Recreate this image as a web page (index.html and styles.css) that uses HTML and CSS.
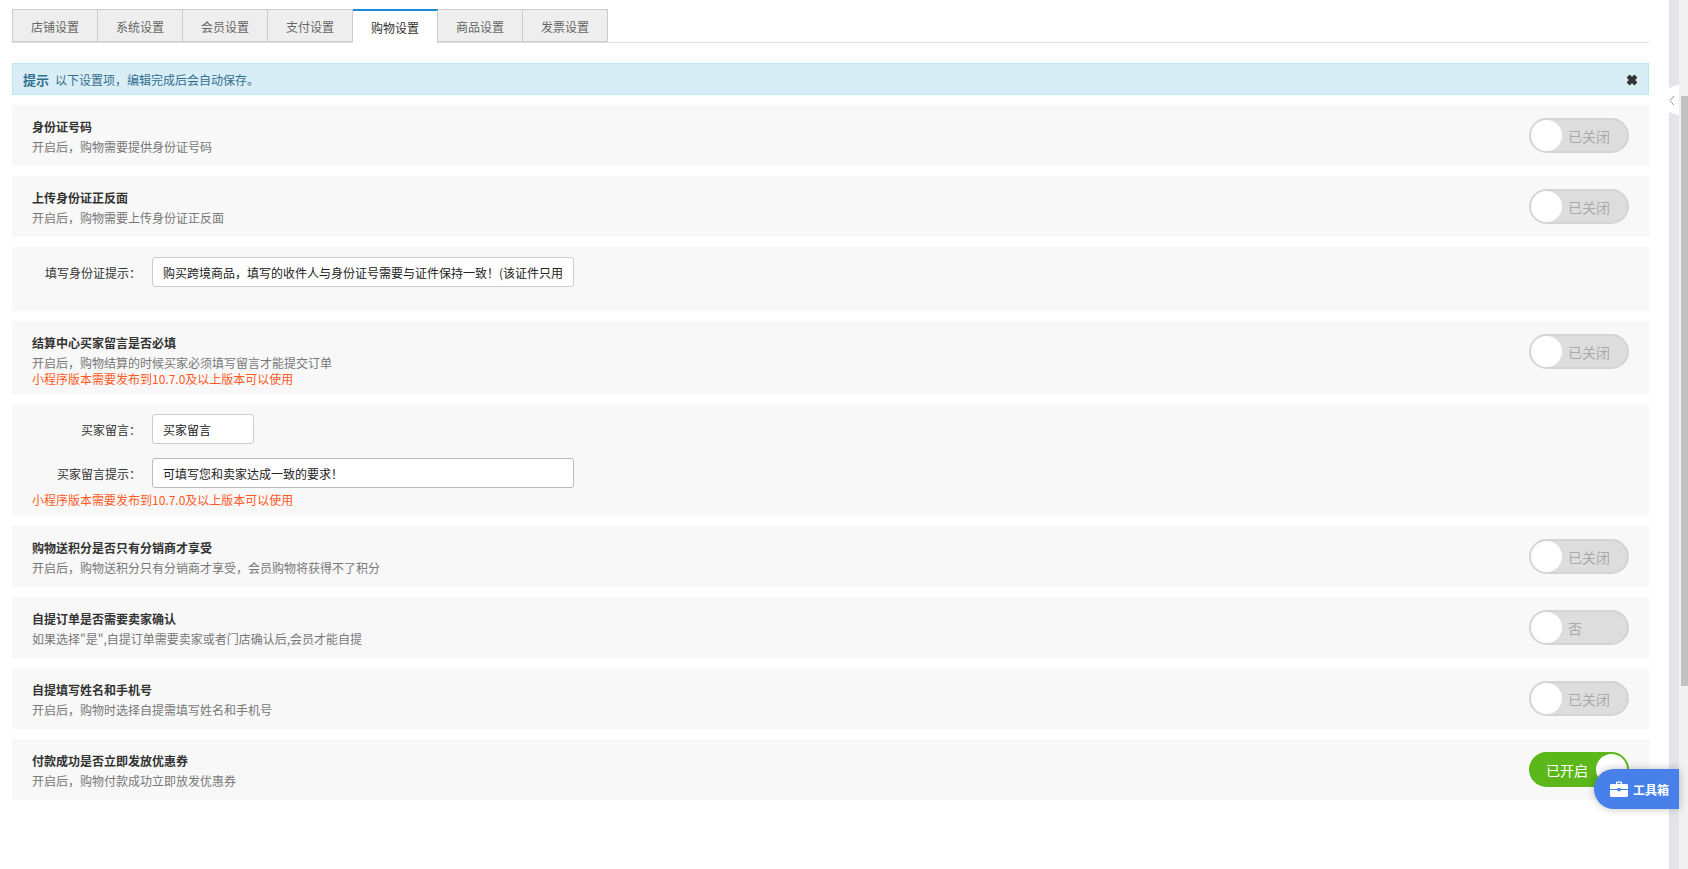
FILE: index.html
```html
<!DOCTYPE html>
<html lang="zh-CN">
<head>
<meta charset="UTF-8">
<meta name="viewport" content="width=device-width, initial-scale=1.0">
<title>购物设置</title>
<link rel="stylesheet" href="styles.css">
</head>
<body>
<div class="page">
  <div class="main">
    <ul class="tabs">
      <li>店铺设置</li>
      <li>系统设置</li>
      <li>会员设置</li>
      <li>支付设置</li>
      <li class="active">购物设置</li>
      <li>商品设置</li>
      <li>发票设置</li>
    </ul>

    <div class="alert">
      <p><strong>提示</strong>以下设置项，编辑完成后会自动保存。</p>
      <svg class="alert-close" width="12" height="12" viewBox="0 0 11 11"><path d="M1.5 3.4 3.4 1.5 5.5 3.600 7.600 1.500 9.500 3.400 7.400 5.500 9.500 7.600 7.600 9.500 5.500 7.400 3.400 9.500 1.500 7.600 3.600 5.500Z" stroke="#333" stroke-width="1.400" stroke-linejoin="round" fill="#333"/></svg>
    </div>

    <div class="row">
      <div class="switch"><i></i><span>已关闭</span></div>
      <h4>身份证号码</h4>
      <p>开启后，购物需要提供身份证号码</p>
    </div>
    <div class="row">
      <div class="switch"><i></i><span>已关闭</span></div>
      <h4>上传身份证正反面</h4>
      <p>开启后，购物需要上传身份证正反面</p>
    </div>
    <div class="row form-row id-tip">
      <div class="field">
        <label>填写身份证提示：</label>
        <input type="text" class="wide" value="购买跨境商品，填写的收件人与身份证号需要与证件保持一致！(该证件只用">
      </div>
    </div>
    <div class="row has-warn">
      <div class="switch"><i></i><span>已关闭</span></div>
      <h4>结算中心买家留言是否必填</h4>
      <p>开启后，购物结算的时候买家必须填写留言才能提交订单</p>
      <p class="warn">小程序版本需要发布到10.7.0及以上版本可以使用</p>
    </div>
    <div class="row form-row">
      <div class="field">
        <label>买家留言：</label>
        <input type="text" class="short" value="买家留言">
      </div>
      <div class="field">
        <label>买家留言提示：</label>
        <input type="text" class="wide strong" value="可填写您和卖家达成一致的要求！">
      </div>
      <p class="warn">小程序版本需要发布到10.7.0及以上版本可以使用</p>
    </div>
    <div class="row">
      <div class="switch"><i></i><span>已关闭</span></div>
      <h4>购物送积分是否只有分销商才享受</h4>
      <p>开启后，购物送积分只有分销商才享受，会员购物将获得不了积分</p>
    </div>
    <div class="row">
      <div class="switch"><i></i><span>否</span></div>
      <h4>自提订单是否需要卖家确认</h4>
      <p>如果选择"是",自提订单需要卖家或者门店确认后,会员才能自提</p>
    </div>
    <div class="row">
      <div class="switch"><i></i><span>已关闭</span></div>
      <h4>自提填写姓名和手机号</h4>
      <p>开启后，购物时选择自提需填写姓名和手机号</p>
    </div>
    <div class="row">
      <div class="switch on"><span>已开启</span><i></i></div>
      <h4>付款成功是否立即发放优惠券</h4>
      <p>开启后，购物付款成功立即放发优惠券</p>
    </div>
  </div>

  <div class="side"></div>
  <div class="scrollbar"><div class="thumb"></div></div>

  <div class="collapse">
    <svg width="6" height="11" viewBox="0 0 6 11"><path d="M5 1 1 5.500 5 10" fill="none" stroke="#999" stroke-width="1"/></svg>
  </div>
  <div class="toolbox">
    <svg width="18" height="16" viewBox="0 0 18 16"><path d="M6 3V1.600C6 .9 6.500.5 7.100.5h3.800c.6 0 1.100.4 1.100 1.100V3h-1.300V1.800H7.300V3Z" fill="#fff"/><path d="M1.500 3h15c.8 0 1.500.6 1.500 1.400V8H10.500V7h-3v1H0V4.400C0 3.600.7 3 1.500 3Z" fill="#fff"/><path d="M0 9h7.500v1.200h3V9H18v5.500c0 .8-.7 1.500-1.500 1.500h-15C.7 16 0 15.300 0 14.500Z" fill="#fff"/></svg>
    <span>工具箱</span>
  </div>
</div>
</body>
</html>
```

FILE: styles.css
```css
* {
  box-sizing: border-box;
}
html, body {
  margin: 0;
  height: 100%;
  overflow: hidden;
}
body {
  background: #fff;
  color: #333;
  font-family: "Noto Sans CJK SC", "Liberation Sans", sans-serif;
  font-size: 12px;
}
.page {
  display: flex;
  height: 869px;
  position: relative;
  overflow: hidden;
}
.main {
  width: 1669px;
  padding: 9px 20px 0 12px;
}
.side {
  width: 10px;
  background: #e4e5ea;
}
.scrollbar {
  width: 9px;
  background: #f1f1f1;
  padding: 96px 0 0 2px;
}
.thumb {
  height: 590px;
  background: #c1c1c1;
}

/* tabs */
.tabs {
  display: flex;
  margin: 0 0 20px;
  padding: 0;
  list-style: none;
  height: 34px;
  border-bottom: 1px solid #ddd;
}
.tabs li {
  width: 85px;
  height: 33px;
  line-height: 33px;
  text-align: center;
  color: #666;
  background: #eee;
  border: 1px solid #ccc;
  border-left-width: 0;
}
.tabs li:first-child {
  width: 86px;
  border-left-width: 1px;
}
.tabs li.active {
  height: 34px;
  color: #333;
  background: #fff;
  border-top: 2px solid #1e88d9;
  border-bottom: 0;
}

/* alert */
.alert {
  display: flex;
  justify-content: space-between;
  align-items: center;
  height: 32px;
  margin-bottom: 10px;
  padding: 0 10px 0 10px;
  color: #31708f;
  background: #d9edf7;
  border: 1px solid #bce8f1;
}
.alert p {
  margin: 0;
}
.alert strong {
  margin-right: 6px;
  font-size: 13px;
}
.alert-close {
  margin-top: 2px;
}

/* rows */
.row {
  min-height: 61px;
  margin-bottom: 10px;
  padding: 12px 20px 9px;
  background: #f8f8f8;
}
.row.has-warn {
  padding-bottom: 7px;
}
.row.has-warn .warn {
  margin-top: -2px;
}
.row h4 {
  margin: 0;
  font-size: 12px;
  line-height: 20px;
  font-weight: 700;
  color: #333;
}
.row p {
  margin: 0;
  line-height: 20px;
  color: #777;
}
.row p.warn {
  line-height: 16px;
  color: #ff5a1f;
}
.form-row {
  padding: 10px 20px 8px;
}
.form-row .warn {
  margin-top: 4px;
}
.id-tip {
  height: 64px;
}
.field {
  display: flex;
  align-items: center;
}
.field + .field {
  margin-top: 14px;
}
.field label {
  width: 109px;
  margin-right: 11px;
  text-align: right;
  color: #333;
}
.field input {
  height: 30px;
  padding: 0 10px;
  color: #222;
  background: #fff;
  border: 1px solid #ccc;
  border-radius: 3px;
  font: inherit;
}
.field input.wide {
  width: 422px;
}
.field input.short {
  width: 102px;
}
.field input.strong {
  border-color: #bbb;
}

/* switches */
.switch {
  float: right;
  display: flex;
  align-items: center;
  width: 100px;
  height: 35px;
  margin-top: 1px;
  color: #aaa;
  font-size: 14px;
  background: #ddd;
  border: 2px solid #d4d4d4;
  border-radius: 18px;
}
.switch i {
  flex: none;
  width: 31px;
  height: 31px;
  background: #fff;
  border-radius: 50%;
}
.switch span {
  margin-left: 6px;
}
.switch.on {
  justify-content: space-between;
  color: #fff;
  background: #5cb81a;
  border-color: #5cb81a;
}
.switch.on span {
  margin-left: 15px;
}

/* overlays */
.collapse {
  position: absolute;
  left: 1664px;
  top: 85px;
  display: flex;
  align-items: center;
  justify-content: center;
  width: 15px;
  height: 30px;
  background: #fff;
  border-radius: 15px 0 0 15px;
}
.toolbox {
  position: absolute;
  left: 1594px;
  top: 769px;
  display: flex;
  align-items: center;
  gap: 5px;
  width: 85px;
  height: 40px;
  padding-left: 16px;
  color: #fff;
  font-weight: 700;
  background: #4680e8;
  border-radius: 20px 0 0 20px;
  box-shadow: 0 0 8px rgba(0, 0, 0, .25);
}
```
